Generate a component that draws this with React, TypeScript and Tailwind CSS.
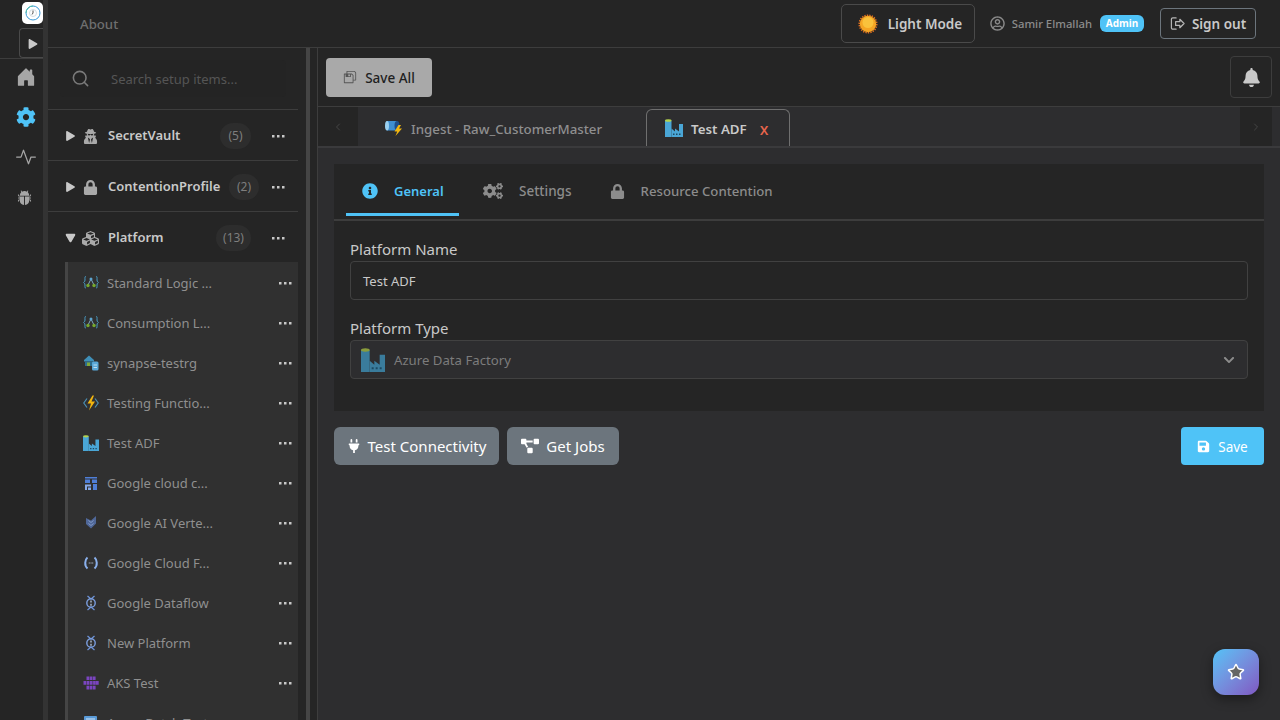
import React from "react";
import { FaCog, FaLock, FaCubes, FaUserSecret, FaInfoCircle, FaCogs, FaPlug, FaProjectDiagram, FaSave, FaBell, FaRegUserCircle, FaPlay, FaChevronDown } from "react-icons/fa";
import { BsActivity, BsBugFill, BsHouseDoorFill } from "react-icons/bs";
import { VscSaveAll } from "react-icons/vsc";
import { LuSearch, LuStar, LuChevronLeft, LuChevronRight } from "react-icons/lu";

// small service icons, drawn by hand
function AdfIcon({ size = 16, muted }: { size?: number; muted?: boolean }) {
  const body = muted ? "#3a7c9c" : "#4aa6d6";
  return (
    <svg width={size} height={size} viewBox="0 0 18 18">
      <path d="M0 1.500h6.500V18H0z" fill={body} />
      <ellipse cx="3.250" cy="1.500" rx="3.250" ry="1.300" fill={muted ? "#8a9c3c" : "#b4d24e"} />
      <path d="M6.500 18V9.500l3.500 3V9.500l4 3V5l4 0v13z" fill={body} />
      <path d="M8 14.500h1.500V16H8zM11 14.500h1.500V16H11zM14 14.500h1.500V16H14z" fill="#1c4a63" />
    </svg>
  );
}

function LogicIcon() {
  return (
    <svg width="16" height="16" viewBox="0 0 16 16" fill="none">
      <path d="M3 1.500C1.500 1.500 2 3 2 5c0 2-1.500 2.500-1.500 2.500S2 8 2 10c0 2-.5 3 1 3M13 1.500c1.500 0 1 1.500 1 3.500 0 2 1.500 2.500 1.500 2.500S14 8 14 10c0 2 .5 3-1 3" stroke="#4a9cc4" strokeWidth="1" />
      <path d="M8 4 5 10M8 4l3 6" stroke="#7fa8c0" strokeWidth="1" />
      <circle cx="8" cy="4" r="1.500" fill="#5ea5d0" />
      <circle cx="5" cy="10.500" r="1.700" fill="#76a82e" />
      <circle cx="11" cy="10.500" r="1.700" fill="#76a82e" />
    </svg>
  );
}

function SynapseIcon() {
  return (
    <svg width="16" height="16" viewBox="0 0 16 16">
      <path d="M1 5 6 .5 11 5v1.500H1z" fill="#3f8fb8" />
      <path d="M2 6.500h8V11H2z" fill="#2c6d8e" />
      <path d="M4 7.500h3V11H4z" fill="#7fa83a" />
      <rect x="9" y="6.500" width="6.500" height="9" rx="1.500" fill="#5aa7d8" />
      <path d="M10.500 10h3.500M10.500 12.500h3.500" stroke="#d7ecf8" strokeWidth="0.800" />
    </svg>
  );
}

function FunctionIcon() {
  return (
    <svg width="16" height="16" viewBox="0 0 16 16" fill="none">
      <path d="M4 3.500 .8 8 4 12.500M12 3.500 15.200 8 12 12.500" stroke="#4a8fb4" strokeWidth="1.200" />
      <path d="M9.500.5 4.500 8.500H8L6 15.500l6-9H8.500L11 .5z" fill="#f2b60f" />
    </svg>
  );
}

function GcsIcon() {
  return (
    <svg width="16" height="16" viewBox="0 0 16 16">
      <path d="M2 2h12v1.500H2zM9 4.500h5V8H9zM10 9h4v6h-4zM2 4.500h5V8H2z" fill="#4f7fd8" />
      <path d="M2 9.500h6v2H4V15H2zM5 12.500h3V15H5z" fill="#85a8e8" />
    </svg>
  );
}

function VertexIcon() {
  return (
    <svg width="16" height="16" viewBox="0 0 16 16">
      <path d="M3 3l5 2.500L13 1v7.500L8 13.500 3 9z" fill="#4f6798" />
      <path d="M5.500 5.500l2.500 2 2.500-2M5.500 8.500l2.500 2 2.500-2" stroke="#8fa6d0" strokeWidth="0.800" fill="none" />
    </svg>
  );
}

function CloudFnIcon() {
  return (
    <svg width="16" height="16" viewBox="0 0 16 16" fill="none">
      <path d="M4.500 2.500C2 4.500 1 10.500 4.500 13.500M11.500 2.500C14 4.500 15 10.500 11.500 13.500" stroke="#8ab0ec" strokeWidth="2" />
      <path d="M5.800 8h.9M7.600 8h.9M9.300 8h.9" stroke="#c6d6f0" strokeWidth="1" />
    </svg>
  );
}

function DataflowIcon() {
  return (
    <svg width="16" height="16" viewBox="0 0 16 16" fill="none">
      <path d="M4.500 1 8 4l3.500-3M4.500 15 8 12l3.500 3" stroke="#6d93d8" strokeWidth="1.300" />
      <circle cx="8" cy="8" r="4.200" stroke="#7b9ede" strokeWidth="1.400" />
      <path d="M8 5.500v2M8 8.800v2" stroke="#c6d6f0" strokeWidth="1.200" />
    </svg>
  );
}

function AksIcon() {
  return (
    <svg width="16" height="16" viewBox="0 0 16 16" fill="#7a45bf">
      <path d="M3.500 1.500h2.700v3.500H3.500zM6.700 1.500h2.700v3.500H6.700zM9.900 1.500h2.700v3.500H9.900z" />
      <path d="M.5 6h2.700v3.700H.5zM3.700 6h2.700v3.700H3.700zM6.900 6h2.700v3.700H6.900zM10.100 6h2.700v3.700h-2.700zM13 6h2.700v3.700H13z" />
      <path d="M3.500 10.700h2.700v3.700H3.500zM6.700 10.700h2.700v3.700H6.700zM9.900 10.700h2.700v3.700H9.900z" />
    </svg>
  );
}

function BatchIcon() {
  return (
    <svg width="16" height="16" viewBox="0 0 16 16">
      <rect x="1" y="1" width="13" height="14" rx="1" fill="#5a9bd8" />
      <path d="M3 4h9M3 7h9" stroke="#d6e8f8" strokeWidth="1.200" />
    </svg>
  );
}

function PipelineIcon() {
  return (
    <svg width="18" height="16" viewBox="0 0 18 16">
      <path d="M2 1h10v9.500H2z" fill="#3f8fd0" />
      <ellipse cx="2" cy="5.750" rx="2" ry="4.750" fill="#9ad0f0" />
      <ellipse cx="12" cy="5.750" rx="2.500" ry="4.750" fill="#1f4f8a" />
      <path d="M13.500 5 9.500 11.500h2.700L10.500 16l6.500-7.500h-3L16 5z" fill="#f2b60f" />
    </svg>
  );
}

function Dots() {
  return (
    <svg width="13" height="3" viewBox="0 0 13 3" fill="#c8c8c8" className="shrink-0">
      <rect x="0" y="0" width="2.500" height="2.500" />
      <rect x="5" y="0" width="2.500" height="2.500" />
      <rect x="10" y="0" width="2.500" height="2.500" />
    </svg>
  );
}

const platforms: { name: string; icon: React.ReactNode }[] = [
  { name: "Standard Logic ...", icon: <LogicIcon /> },
  { name: "Consumption L...", icon: <LogicIcon /> },
  { name: "synapse-testrg", icon: <SynapseIcon /> },
  { name: "Testing Functio...", icon: <FunctionIcon /> },
  { name: "Test ADF", icon: <AdfIcon /> },
  { name: "Google cloud c...", icon: <GcsIcon /> },
  { name: "Google AI Verte...", icon: <VertexIcon /> },
  { name: "Google Cloud F...", icon: <CloudFnIcon /> },
  { name: "Google Dataflow", icon: <DataflowIcon /> },
  { name: "New Platform", icon: <DataflowIcon /> },
  { name: "AKS Test", icon: <AksIcon /> },
  { name: "Azure Batch Test", icon: <BatchIcon /> },
];

function SectionRow({ open, icon, label, count, badgeClass, rowClass }: { open?: boolean; icon: React.ReactNode; label: string; count: string; badgeClass: string; rowClass: string }) {
  return (
    <div className={`flex shrink-0 items-center pl-[17px] pr-[13px] pt-[2px] ${rowClass}`}>
      <FaPlay className={`h-[10px] w-[11px] shrink-0 text-[#c8c8c8] ${open ? "rotate-90" : ""}`} />
      <span className="ml-[5px] flex w-[18px] shrink-0 justify-center text-[#a9a9a9]">{icon}</span>
      <span className="ml-[9px] text-[13px] font-semibold text-[#c9c9c9]">{label}</span>
      <span className={`ml-auto flex h-[26px] items-center justify-center rounded-full bg-[#2d2d2d] text-xs text-[#7e7e7e] ${badgeClass}`}>{count}</span>
      <span className="ml-[21px]"><Dots /></span>
    </div>
  );
}

export default function App() {
  return (
    <div className="flex h-[720px] w-[1280px] overflow-hidden bg-[#252525] font-['Noto_Sans',sans-serif] text-[#c9c9c9]">
      {/* icon rail */}
      <aside className="flex w-[48px] shrink-0 flex-col border-r-[5px] border-[#333333] bg-[#252525]">
        <div className="flex h-[59px] shrink-0 flex-col items-end border-b border-[#3d3d3d] pt-[2px]">
          <div className="flex h-[22px] w-[21px] items-center justify-center rounded-[5px] bg-white">
            <svg width="18" height="18" viewBox="0 0 18 18" fill="none">
              <circle cx="9" cy="9" r="7" stroke="#3a9ad9" strokeWidth="1" />
              <path d="M2 9a7 7 0 0 1 7-7" stroke="#4fc0a8" strokeWidth="1" />
              <circle cx="9" cy="9" r="3.500" stroke="#c8d4dc" strokeWidth="0.800" />
              <path d="M9 6.500V9l-1 1.500" stroke="#555" strokeWidth="1" />
            </svg>
          </div>
          <div className="mt-[4px] flex h-[30px] w-[24px] items-center justify-center rounded-l-[4px] border border-r-0 border-[#4a4a4a] bg-[#252525] pl-[3px] pt-[2px]">
            <FaPlay className="h-[10px] w-[10px] text-[#c9c9c9]" />
          </div>
        </div>
        <div className="flex w-[43px] flex-col items-center gap-[20px] pl-[9px] pt-[8px]">
          <BsHouseDoorFill className="h-[20px] w-[20px] text-[#a6a6a6]" />
          <FaCog className="h-[20px] w-[20px] text-[#4fc3f7]" />
          <BsActivity className="h-[20px] w-[20px] text-[#a6a6a6]" />
          <BsBugFill className="-ml-[4px] mt-[3px] h-[15px] w-[15px] text-[#a6a6a6]" />
        </div>
      </aside>

      <div className="flex min-w-0 flex-1 flex-col">
        {/* top bar */}
        <header className="flex h-[48px] shrink-0 items-center border-b border-[#3d3d3d] bg-[#252525] pl-[32px] pr-[24px]">
          <span className="pt-[2px] text-[13.200px] font-medium text-[#6f6f6f]">About</span>
          <div className="ml-auto flex h-[39px] w-[134px] items-center rounded-[5px] border border-[#4a4a4a] pl-[16px]">
            <svg width="20" height="20" viewBox="0 0 20 20">
              <circle cx="10" cy="10" r="8.800" fill="none" stroke="#e2701f" strokeWidth="1.500" strokeDasharray="1.400 1.100" />
              <circle cx="10" cy="10" r="8.200" fill="#f5a524" />
              <circle cx="10" cy="8.500" r="5.500" fill="#f9c23c" />
            </svg>
            <span className="ml-[10px] pt-[2px] text-[13.500px] font-semibold text-[#c9c9c9]">Light Mode</span>
          </div>
          <FaRegUserCircle className="ml-[15px] h-[15px] w-[15px] text-[#8a8a8a]" />
          <span className="ml-[7px] pt-[1px] text-[11.300px] font-medium text-[#8c8c8c]">Samir Elmallah</span>
          <span className="ml-[8px] flex h-[17px] w-[44px] items-center justify-center rounded-[6px] bg-[#4fc3f7] text-[10px] font-bold text-white">Admin</span>
          <div className="ml-[16px] flex h-[31px] w-[96px] items-center justify-center gap-[7px] rounded-[4px] border border-[#6c757d]">
            <svg width="15" height="15" viewBox="0 0 16 16" fill="none" stroke="#b5b5b5" strokeWidth="1.300" strokeLinejoin="round">
              <path d="M6.500 2H3A1.500 1.500 0 0 0 1.500 3.500v9A1.500 1.500 0 0 0 3 14h3.500" strokeLinecap="round" />
              <path d="M6 6h4.500V3.500L15 8l-4.500 4.500V10H6z" />
            </svg>
            <span className="pt-[1px] text-[13.500px] font-semibold text-[#c9c9c9]">Sign out</span>
          </div>
        </header>

        <div className="flex min-h-0 flex-1">
          {/* setup tree */}
          <nav className="flex w-[270px] shrink-0 border-r border-[#3d3d3d]">
            <div className="flex w-[250px] shrink-0 flex-col overflow-hidden">
              <div className="flex h-[62px] shrink-0 items-center border-b border-[#3d3d3d] px-[12px]">
                <div className="flex h-[37px] flex-1 items-center rounded-[4px] bg-[#242424] pl-[11px]">
                  <LuSearch className="h-[19px] w-[19px] text-[#7a7a7a]" />
                  <span className="ml-[21px] pt-[2px] text-[13px] text-[#555555]">Search setup items...</span>
                </div>
              </div>
              <SectionRow rowClass="h-[51px] border-b border-[#3d3d3d]" icon={<FaUserSecret className="h-[15px] w-[15px]" />} label="SecretVault" count="(5)" badgeClass="w-[31px]" />
              <SectionRow rowClass="h-[51px] border-b border-[#3d3d3d]" icon={<FaLock className="h-[15px] w-[15px]" />} label="ContentionProfile" count="(2)" badgeClass="-mr-[8px] w-[30px]" />
              <SectionRow open rowClass="h-[50px]" icon={<FaCubes className="h-[17px] w-[17px]" />} label="Platform" count="(13)" badgeClass="w-[35px]" />
              <div className="ml-[17px] flex flex-col border-l-[3px] border-[#454545] bg-[#303030] pt-[1px]">
                {platforms.map((p) => (
                  <div key={p.name} className="flex h-[40px] shrink-0 items-center pl-[15px] pr-[6px]">
                    <span className="flex w-[16px] shrink-0 justify-center">{p.icon}</span>
                    <span className="ml-[8px] pt-[2px] text-[13px] text-[#8f8f8f]">{p.name}</span>
                    <span className="ml-auto"><Dots /></span>
                  </div>
                ))}
              </div>
            </div>
            <div className="ml-[8px] w-[4px] bg-[#454545]" />
          </nav>

          {/* main area */}
          <main className="relative flex min-w-0 flex-1 flex-col bg-[#2d2d2f]">
            <div className="flex h-[59px] shrink-0 items-center justify-between border-b border-[#3d3d3d] bg-[#252525] px-[8px]">
              <button className="flex h-[39px] w-[106px] items-center justify-center gap-[8px] rounded-[4px] bg-[#a9a9a9] text-[13.500px] font-medium text-[#1f1f1f]">
                <VscSaveAll className="h-[14px] w-[14px] text-[#555555]" />
                <span className="pt-[2px]">Save All</span>
              </button>
              <div className="flex h-[42px] w-[42px] items-center justify-center rounded-[4px] border border-[#3d3d3d]">
                <FaBell className="h-[19px] w-[19px] text-[#c9c9c9]" />
              </div>
            </div>

            <div className="flex h-[41px] shrink-0 items-end border-b-2 border-[#3a3a3c] bg-[#2d2d2f] pr-[8px]">
              <div className="flex h-[39px] w-[40px] items-center justify-center bg-[#252525]">
                <LuChevronLeft className="h-[12px] w-[12px] text-[#454545]" />
              </div>
              <div className="flex h-[39px] items-center pl-[27px]">
                <span className="pt-[2px]"><PipelineIcon /></span>
                <span className="ml-[8px] pt-[6px] text-[13.300px] font-medium text-[#8f8f8f]">Ingest - Raw_CustomerMaster</span>
              </div>
              <div className="ml-[44px] flex h-[37px] w-[144px] items-center rounded-t-[6px] border border-b-0 border-[#6f6f6f] pl-[18px]">
                <AdfIcon size={18} />
                <span className="ml-[8px] pt-[3px] text-[13.300px] font-semibold text-[#c9c9c9]">Test ADF</span>
                <span className="ml-[13px] pt-[1px] text-[16px] font-medium text-[#e8654c]">x</span>
              </div>
              <div className="ml-auto flex h-[39px] w-[32px] items-center justify-center bg-[#252525]">
                <LuChevronRight className="h-[12px] w-[12px] text-[#454545]" />
              </div>
            </div>

            <div className="flex flex-1 flex-col px-[16px] pt-[16px]">
              <section className="h-[247px] bg-[#252525]">
                <div className="flex h-[57px] border-b-2 border-[#3d3d3d] pl-[12px]">
                  <div className="flex h-[52px] w-[113px] items-center border-b-[3px] border-[#4fc3f7] pl-[16px] pt-[5px]">
                    <FaInfoCircle className="h-[16px] w-[16px] text-[#4fc3f7]" />
                    <span className="ml-[16px] pt-[2px] text-[13px] font-semibold text-[#4fc3f7]">General</span>
                  </div>
                  <div className="ml-[24px] flex h-[52px] items-center pb-[3px] pt-[5px]">
                    <FaCogs className="h-[20px] w-[20px] text-[#8c8c8c]" />
                    <span className="ml-[16px] pt-[1px] text-[13.500px] font-medium text-[#8c8c8c]">Settings</span>
                  </div>
                  <div className="ml-[38px] flex h-[52px] items-center pb-[3px] pt-[5px]">
                    <FaLock className="h-[15px] w-[15px] text-[#8c8c8c]" />
                    <span className="ml-[16px] pt-[2px] text-[13.200px] font-medium text-[#8c8c8c]">Resource Contention</span>
                  </div>
                </div>
                <div className="flex flex-col px-[16px] pt-[16px]">
                  <label className="text-[15px] leading-[24px] text-[#c9c9c9]">Platform Name</label>
                  <div className="flex h-[39px] items-center rounded-[4px] border border-[#414141] px-[12px] pt-[2px] text-[13px] text-[#c9c9c9]">Test ADF</div>
                  <label className="mt-[16px] text-[15px] leading-[24px] text-[#c9c9c9]">Platform Type</label>
                  <div className="flex h-[39px] items-center rounded-[4px] border border-[#414141] bg-[#2d2d2f] pl-[10px] pr-[12px] text-[13.200px] text-[#7c7c7c]">
                    <AdfIcon size={24} muted />
                    <span className="ml-[9px] pt-[2px]">Azure Data Factory</span>
                    <FaChevronDown className="ml-auto h-[12px] w-[12px] text-[#8c8c8c]" />
                  </div>
                </div>
              </section>
              <div className="mt-[16px] flex items-center">
                <button className="flex h-[38px] w-[165px] items-center justify-center gap-[7px] rounded-[6px] bg-[#6c757d] text-[15px] text-white">
                  <FaPlug className="h-[14px] w-[14px]" />
                  Test Connectivity
                </button>
                <button className="ml-[8px] flex h-[38px] w-[112px] items-center justify-center gap-[7px] rounded-[6px] bg-[#6c757d] text-[15px] text-white">
                  <FaProjectDiagram className="h-[18px] w-[18px]" />
                  Get Jobs
                </button>
                <button className="ml-auto flex h-[38px] w-[83px] items-center justify-center gap-[8px] rounded-[4px] bg-[#4fc3f7] text-[13.500px] text-white">
                  <FaSave className="h-[13px] w-[13px]" />
                  <span className="pt-[2px]">Save</span>
                </button>
              </div>
            </div>

            <button className="absolute bottom-[25px] right-[21px] flex h-[46px] w-[46px] items-center justify-center rounded-[12px] bg-gradient-to-br from-[#4fc3f7] to-[#7e57c2] shadow-[0_4px_12px_rgba(0,0,0,0.4)]">
              <LuStar className="h-[18px] w-[18px] fill-[#666666] text-white" />
            </button>
          </main>
        </div>
      </div>
    </div>
  );
}
